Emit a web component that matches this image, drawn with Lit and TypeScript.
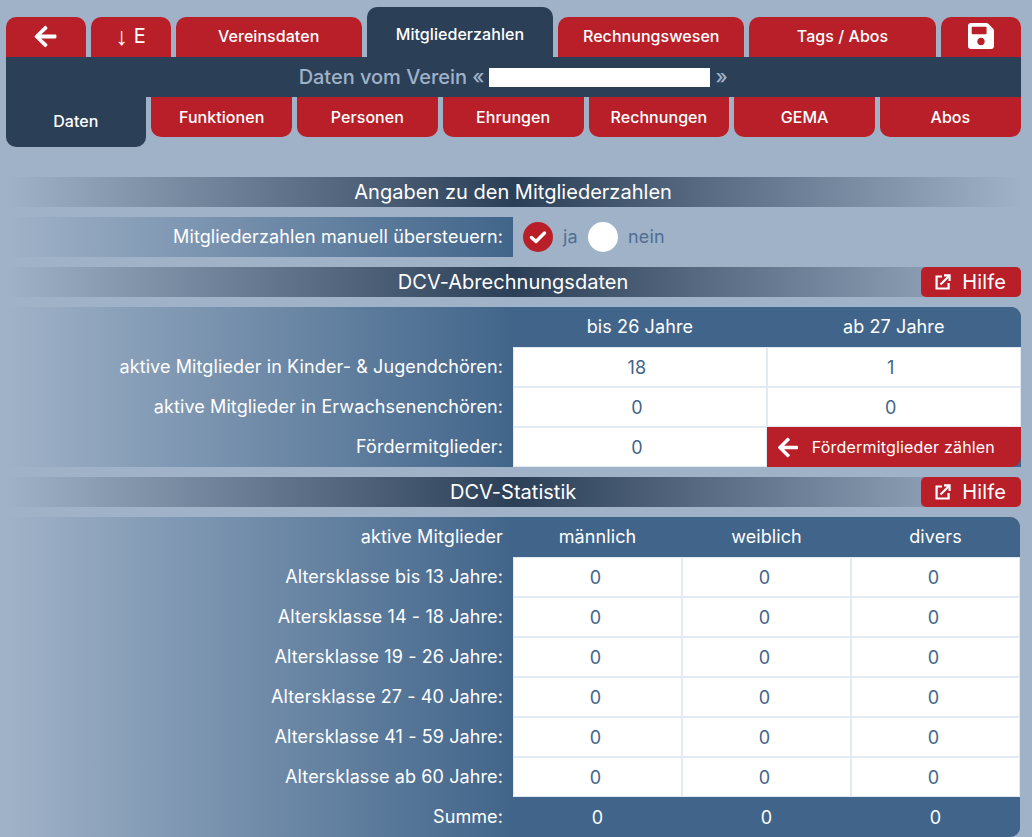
import { LitElement, html, css, svg } from "lit";
import { customElement } from "lit/decorators.js";

const arrow = svg`<path d="M257.5 445.1l-22.2 22.2c-9.4 9.4-24.6 9.4-33.9 0L7 273c-9.4-9.4-9.4-24.6 0-33.9L201.4 44.7c9.4-9.4 24.6-9.4 33.9 0l22.2 22.2c9.5 9.5 9.3 25-.4 34.3L136.6 216H424c13.3 0 24 10.7 24 24v32c0 13.3-10.7 24-24 24H136.6l120.5 114.8c9.8 9.3 10 24.8.4 34.3z"/>`;
const save = svg`<path d="M433.941 129.941l-83.882-83.882A48 48 0 0 0 316.118 32H48C21.49 32 0 53.49 0 80v352c0 26.51 21.49 48 48 48h352c26.51 0 48-21.49 48-48V163.882a48 48 0 0 0-14.059-33.941zM224 416c-35.346 0-64-28.654-64-64 0-35.346 28.654-64 64-64s64 28.654 64 64c0 35.346-28.654 64-64 64zm96-304.52V212c0 6.627-5.373 12-12 12H76c-6.627 0-12-5.373-12-12V108c0-6.627 5.373-12 12-12h228.52c3.183 0 6.235 1.264 8.485 3.515l3.48 3.48A11.996 11.996 0 0 1 320 111.48z"/>`;

const ext = html`<svg class="ext" viewBox="0 0 16 16" fill="none" stroke="#fff" stroke-width="2.2"><path d="M7 2.5H1.6v12h12V9"/><path d="M5.5 10.5 14.5 1.5M9 1.4h5.6V7"/></svg>`;

@customElement("app-root")
export class AppRoot extends LitElement {
  static styles = css`
    :host { display: block; height: 837px; overflow: hidden; background: #a0b2c8; font-family: "Inter", "Roboto", sans-serif; font-size: 18px; letter-spacing: 0.1px; color: #fff; }
    .page { padding: 7px 11.3px 0 5.5px; }
    .tabs { display: flex; gap: 5px; align-items: flex-end; }
    .tab { flex: 1 1 0; min-width: 0; height: 40px; display: flex; align-items: center; justify-content: center; background: #b81f28; }
    .top .tab { border-radius: 10px 10px 0 0; padding-bottom: 2px; box-sizing: border-box; }
    .top .tab.icon { flex: 0 0 80px; }
    .top .tab.active { height: 50px; background: #2b3f57; padding-bottom: 0; padding-top: 4px; }
    .tabs.sub { align-items: flex-start; }
    .sub .tab { border-radius: 0 0 10px 10px; box-sizing: border-box; }
    .sub .tab.active { height: 50px; background: #2b3f57; padding-bottom: 2px; }
    .tab .lbl { font-size: 16px; font-weight: 450; letter-spacing: 0.05px; }
    .ed { font-size: 20px; display: flex; align-items: center; gap: 6px; }
    .ed i { font-family: "Liberation Sans", sans-serif; font-style: normal; font-size: 25px; line-height: 1; }
    .arrow { width: 25px; height: 25px; fill: #fff; }
    .disk { width: 26px; height: 30px; fill: #fff; }
    .title { height: 40px; background: #2b3f57; display: flex; align-items: center; justify-content: center; gap: 5px; color: #a0b2c8; font-size: 20px; font-weight: 450; letter-spacing: -0.03px; }
    .mask { width: 221px; height: 19px; background: #fff; }
    .head { position: relative; height: 30px; display: flex; align-items: center; justify-content: center; font-size: 20px; letter-spacing: 0.02px; background: linear-gradient(90deg, rgba(43,63,87,0), #2b3f57 50%, rgba(43,63,87,0)); }
    .head.h1 { margin-top: 30px; }
    .head.h3 { margin-top: 10px; }
    .help { position: absolute; right: 0; top: 0; width: 100px; height: 30px; border-radius: 5px; background: #b81f28; display: flex; align-items: center; justify-content: center; gap: 11px; font-size: 20px; letter-spacing: 0.2px; }
    .ext { width: 16px; height: 16px; }
    .over { display: flex; height: 40px; margin: 10px 0; align-items: center; }
    .over .l { width: 507.5px; height: 40px; box-sizing: border-box; padding: 0 10px 2px 0; display: flex; align-items: center; justify-content: flex-end; background: linear-gradient(90deg, rgba(65,101,138,0), #41658a); }
    .radio { width: 30px; height: 30px; border-radius: 50%; background: #fff; display: flex; align-items: center; justify-content: center; flex: none; }
    .radio.on { background: #b81f28; margin-left: 10px; }
    .rl { color: #4f6f93; margin: 0 10px 2px; letter-spacing: 0.2px; }
    .table { display: grid; margin-top: 10px; }
    .t1 { grid-template-columns: 507.5px 1fr 1fr; grid-auto-rows: 40px; background: linear-gradient(90deg, rgba(65,101,138,0), #41658a 507px); border-top-right-radius: 10px; }
    .t2 { grid-template-columns: 507.5px 169px 169px 169px; width: 1014.5px; grid-auto-rows: 40px; background: linear-gradient(90deg, rgba(65,101,138,0), #41658a 507px); border-radius: 0 10px 10px 0; }
    .c { display: flex; align-items: center; justify-content: center; min-width: 0; box-sizing: border-box; padding-bottom: 2px; }
    .r { justify-content: flex-end; padding-right: 10px; }
    .th { background: #41658a; }
    .th.tr { border-top-right-radius: 10px; }
    .v { background: #fff; color: #41658a; box-shadow: inset -1px -1px 0 #e4eaf1, inset 1px 1px 0 #e4eaf1; padding: 0 4px 0 0; }
    .t1 .v { padding-right: 6px; }
    .s { background: #41658a; padding-bottom: 0; }
    .s.br { border-bottom-right-radius: 10px; }
    .cta { background: #b81f28; border-bottom-right-radius: 10px; font-size: 16px; letter-spacing: 0.18px; gap: 14px; justify-content: flex-start; padding: 0 0 0 11px; }
    .arr2 { width: 20px; height: 23px; fill: #fff; flex: none; }
  `;

  render() {
    const top = ["Vereinsdaten", "Mitgliederzahlen", "Rechnungswesen", "Tags / Abos"];
    const sub = ["Daten", "Funktionen", "Personen", "Ehrungen", "Rechnungen", "GEMA", "Abos"];
    const ages = ["bis 13 Jahre", "14 - 18 Jahre", "19 - 26 Jahre", "27 - 40 Jahre", "41 - 59 Jahre", "ab 60 Jahre"];
    return html`<div class="page">
      <div class="tabs top">
        <div class="tab icon"><svg class="arrow" viewBox="0 0 448 512">${arrow}</svg></div>
        <div class="tab icon"><span class="ed"><i>↓</i>E</span></div>
        ${top.map((t) => html`<div class="tab ${t === "Mitgliederzahlen" ? "active" : ""}"><span class="lbl">${t}</span></div>`)}
        <div class="tab icon"><svg class="disk" viewBox="0 0 448 512">${save}</svg></div>
      </div>
      <div class="title"><span>Daten vom Verein «</span><span class="mask"></span><span>»</span></div>
      <div class="tabs sub">
        ${sub.map((t, i) => html`<div class="tab ${i === 0 ? "active" : ""}"><span class="lbl">${t}</span></div>`)}
      </div>
      <div class="head h1">Angaben zu den Mitgliederzahlen</div>
      <div class="over">
        <div class="l">Mitgliederzahlen manuell übersteuern:</div>
        <div class="radio on"><svg width="18" height="18" viewBox="0 0 18 18" fill="none" stroke="#fff" stroke-width="3.4" stroke-linecap="round" stroke-linejoin="round"><path d="M2.5 9.5 7 13.5 15.5 5"/></svg></div>
        <span class="rl">ja</span>
        <div class="radio"></div>
        <span class="rl">nein</span>
      </div>
      <div class="head">DCV-Abrechnungsdaten<div class="help">${ext}<span>Hilfe</span></div></div>
      <div class="table t1">
        <div></div><div class="c th">bis 26 Jahre</div><div class="c th tr">ab 27 Jahre</div>
        <div class="c r">aktive Mitglieder in Kinder- &amp; Jugendchören:</div><div class="c v">18</div><div class="c v">1</div>
        <div class="c r">aktive Mitglieder in Erwachsenenchören:</div><div class="c v">0</div><div class="c v">0</div>
        <div class="c r">Fördermitglieder:</div><div class="c v">0</div>
        <div class="c cta"><svg class="arr2" viewBox="0 0 448 512">${arrow}</svg><span>Fördermitglieder zählen</span></div>
      </div>
      <div class="head h3">DCV-Statistik<div class="help">${ext}<span>Hilfe</span></div></div>
      <div class="table t2">
        <div class="c r">aktive Mitglieder</div><div class="c th">männlich</div><div class="c th">weiblich</div><div class="c th tr">divers</div>
        ${ages.map((a) => html`<div class="c r">Altersklasse ${a}:</div><div class="c v">0</div><div class="c v">0</div><div class="c v">0</div>`)}
        <div class="c r">Summe:</div><div class="c s">0</div><div class="c s">0</div><div class="c s br">0</div>
      </div>
    </div>`;
  }
}
